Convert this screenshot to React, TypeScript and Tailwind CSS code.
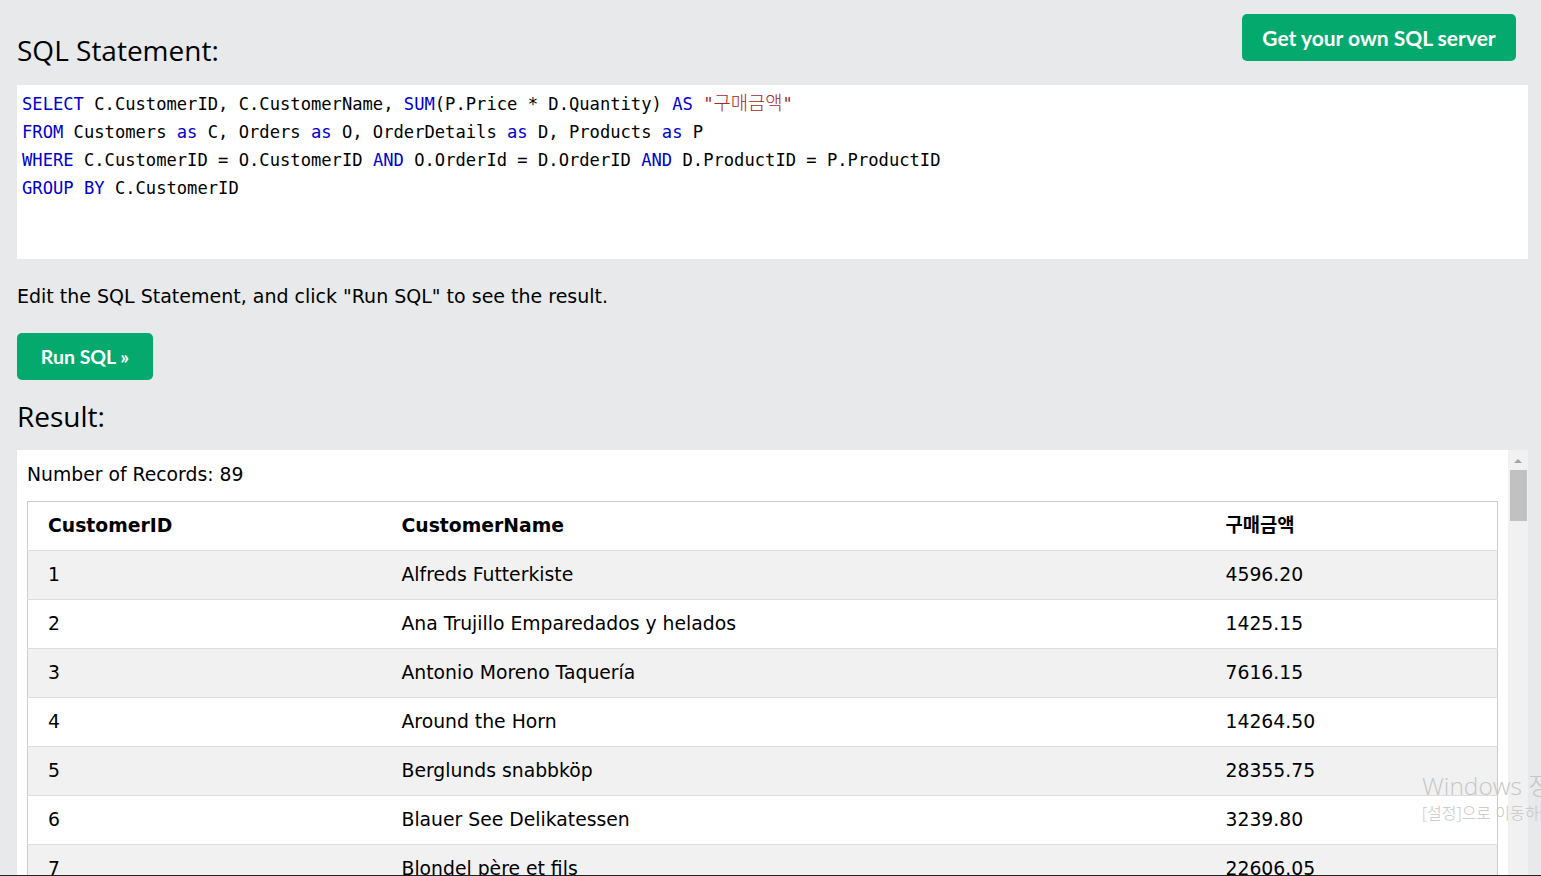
import React from "react";

const segoe = { fontFamily: '"Open Sans", "Noto Sans CJK KR", sans-serif' };
const verdana = { fontFamily: '"DejaVu Sans", "Noto Sans CJK KR", sans-serif' };

type Tok = [string, "k" | "s" | "t" | "h"];

const sqlLines: Tok[][] = [
  [
    ["SELECT", "k"],
    [" C.CustomerID, C.CustomerName, ", "t"],
    ["SUM", "k"],
    ["(P.Price * D.Quantity) ", "t"],
    ["AS", "k"],
    [" ", "t"],
    ['"', "s"],
    ["구매금액", "h"],
    ['"', "s"],
  ],
  [
    ["FROM", "k"],
    [" Customers ", "t"],
    ["as", "k"],
    [" C, Orders ", "t"],
    ["as", "k"],
    [" O, OrderDetails ", "t"],
    ["as", "k"],
    [" D, Products ", "t"],
    ["as", "k"],
    [" P", "t"],
  ],
  [
    ["WHERE", "k"],
    [" C.CustomerID = O.CustomerID ", "t"],
    ["AND", "k"],
    [" O.OrderId = D.OrderID ", "t"],
    ["AND", "k"],
    [" D.ProductID = P.ProductID", "t"],
  ],
  [
    ["GROUP BY", "k"],
    [" C.CustomerID", "t"],
  ],
];

const rows: [number, string, string][] = [
  [1, "Alfreds Futterkiste", "4596.20"],
  [2, "Ana Trujillo Emparedados y helados", "1425.15"],
  [3, "Antonio Moreno Taquería", "7616.15"],
  [4, "Around the Horn", "14264.50"],
  [5, "Berglunds snabbköp", "28355.75"],
  [6, "Blauer See Delikatessen", "3239.80"],
  [7, "Blondel père et fils", "22606.05"],
  [8, "Bólido Comidas preparadas", "4035.80"],
  [9, "Bon app'", "22311.35"],
];

const tokColor = {
  k: "text-[#0000cd]",
  s: "text-[#a52a2a]",
  h: "text-[#a52a2a] text-[18.8px] font-light",
  t: "text-black",
};

export default function App() {
  return (
    <div className="relative flex h-[876px] w-full flex-col overflow-hidden bg-[#e7e9eb] pl-[17px] pr-[13px] text-black">
      {/* Top row: heading + server button */}
      <div className="flex items-start justify-between pt-[14px]">
        <h2 className="mt-[17px] text-[28px] leading-[38px]" style={segoe}>
          SQL Statement:
        </h2>
        <button
          className="mr-[12px] h-[47px] w-[274px] rounded-[5px] bg-[#04aa6d] text-[21px] font-bold text-white"
          style={{ fontFamily: "Lato, sans-serif" }}
        >
          Get your own SQL server
        </button>
      </div>

      {/* Code editor */}
      <div
        className="mt-[16px] h-[174px] bg-white px-[5px] pt-[5px] text-[17.15px] leading-[28px]"
        style={{ fontFamily: '"DejaVu Sans Mono", "Noto Sans CJK KR", monospace' }}
      >
        {sqlLines.map((line, i) => (
          <div key={i} className="whitespace-pre">
            {line.map(([text, kind], j) => (
              <span key={j} className={tokColor[kind]}>
                {text}
              </span>
            ))}
          </div>
        ))}
      </div>

      <p className="mt-[23px] text-[19px] leading-[28px]" style={verdana}>
        Edit the SQL Statement, and click "Run SQL" to see the result.
      </p>

      <div className="mt-[23px]">
        <button
          className="h-[47px] w-[136px] rounded-[5px] bg-[#04aa6d] text-[19.5px] font-bold text-white"
          style={{ fontFamily: "Lato, sans-serif" }}
        >
          Run SQL »
        </button>
      </div>

      <h2 className="mt-[18px] text-[28px] leading-[36px]" style={segoe}>
        Result:
      </h2>

      {/* Result panel with scrollbar */}
      <div className="mt-[16px] flex min-h-0 flex-1">
        <div className="flex-1 overflow-hidden bg-white px-[10px] text-[18.8px]" style={verdana}>
          <div className="flex h-[51px] items-center">Number of Records: 89</div>
          <table className="w-full table-fixed border-collapse border border-[#cccccc]">
            <colgroup>
              <col className="w-[364px]" />
              <col className="w-[824px]" />
              <col />
            </colgroup>
            <thead>
              <tr className="h-[49px] border-b border-[#dddddd] bg-white font-bold">
                <th className="pl-[20px] text-left">CustomerID</th>
                <th className="pl-[10px] text-left">CustomerName</th>
                <th className="pl-[10px] text-left">구매금액</th>
              </tr>
            </thead>
            <tbody>
              {rows.map(([id, name, amount], i) => (
                <tr
                  key={id}
                  className={`h-[49px] border-b border-[#dddddd] ${i % 2 === 0 ? "bg-[#f1f1f1]" : "bg-white"}`}
                >
                  <td className="pl-[20px]">{id}</td>
                  <td className="pl-[10px]">{name}</td>
                  <td className="pl-[10px]">{amount}</td>
                </tr>
              ))}
            </tbody>
          </table>
        </div>
        {/* scrollbar */}
        <div className="flex w-[20px] flex-col items-center bg-[#f1f1f1]">
          <div className="mt-[9px] h-0 w-0 border-x-[4px] border-b-[4px] border-x-transparent border-b-[#a3a3a3]" />
          <div className="mt-[7px] h-[51px] w-[17px] bg-[#c1c1c1]" />
        </div>
      </div>

      {/* Windows activation watermark */}
      <div
        className="pointer-events-none absolute left-[1422px] top-[770px] whitespace-nowrap text-[#c6c6c6]"
        style={segoe}
      >
        <div className="text-[24.5px] font-light leading-[32px]">Windows 정품 인증</div>
        <div className="text-[16px] font-light leading-[22px]">
          [설정]으로 이동하여 Windows를 정품 인증합니다.
        </div>
      </div>

      {/* taskbar edge */}
      <div className="absolute bottom-0 left-0 h-px w-full bg-[#1f2326]" />
    </div>
  );
}
